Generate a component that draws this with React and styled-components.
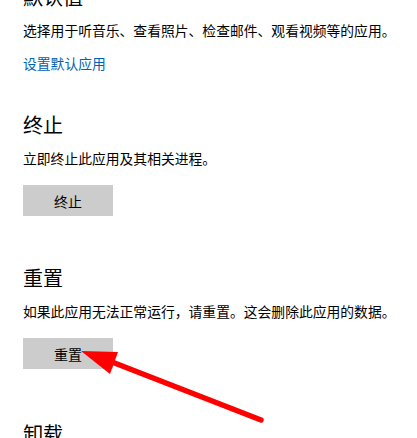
import React from "react";
import styled, { createGlobalStyle } from "styled-components";

const GlobalStyle = createGlobalStyle`
  html, body {
    margin: 0;
    padding: 0;
    background: #fff;
  }
  body {
    font-family: "Noto Sans CJK SC", "Noto Sans", sans-serif;
    color: #000;
  }
`;

const sections = [
  {
    title: "默认值",
    desc: "选择用于听音乐、查看照片、检查邮件、观看视频等的应用。",
    link: "设置默认应用",
    after: 38,
  },
  {
    title: "终止",
    desc: "立即终止此应用及其相关进程。",
    button: "终止",
    after: 48,
  },
  {
    title: "重置",
    desc: "如果此应用无法正常运行，请重置。这会删除此应用的数据。",
    button: "重置",
    after: 51,
  },
  {
    title: "卸载",
  },
];

const App = () => {
  return (
    <Frame>
      <GlobalStyle />
      <Page>
        {sections.map((s) => (
          <Section key={s.title} $after={s.after || 0}>
            <Heading>{s.title}</Heading>
            {s.desc && <Desc>{s.desc}</Desc>}
            {s.link && <Link href="#">{s.link}</Link>}
            {s.button && <GrayButton>{s.button}</GrayButton>}
          </Section>
        ))}
      </Page>
      <Arrow viewBox="0 0 417 438" width="417" height="438">
        <line
          x1="112"
          y1="362"
          x2="261"
          y2="420"
          stroke="#ff0000"
          strokeWidth="5.5"
          strokeLinecap="round"
        />
        <polygon points="81,351 118,352 110,374" fill="#ff0000" />
      </Arrow>
    </Frame>
  );
};

const Frame = styled.div`
  position: relative;
  width: 417px;
  height: 438px;
  overflow: hidden;
`;

const Page = styled.div`
  display: flex;
  flex-direction: column;
  margin-top: -17px;
  padding-left: 23px;
`;

const Section = styled.div`
  display: flex;
  flex-direction: column;
  align-items: flex-start;
  margin-bottom: ${({ $after }) => `${$after}px`};
`;

const Heading = styled.div`
  font-size: 20px;
  line-height: 28px;
  font-weight: 400;
`;

const Desc = styled.div`
  margin-top: 9px;
  font-size: 13.8px;
  line-height: 20px;
`;

const Link = styled.a`
  margin-top: 13px;
  font-size: 13.8px;
  line-height: 20px;
  color: #0063b1;
  text-decoration: none;
`;

const GrayButton = styled.button`
  margin-top: 17px;
  width: 90px;
  height: 31px;
  padding: 0;
  border: none;
  background: #cccccc;
  color: #000;
  font-family: "Noto Sans CJK SC", "Noto Sans", sans-serif;
  font-size: 14px;
`;

const Arrow = styled.svg`
  position: absolute;
  top: 0;
  left: 0;
  pointer-events: none;
`;

export default App;
